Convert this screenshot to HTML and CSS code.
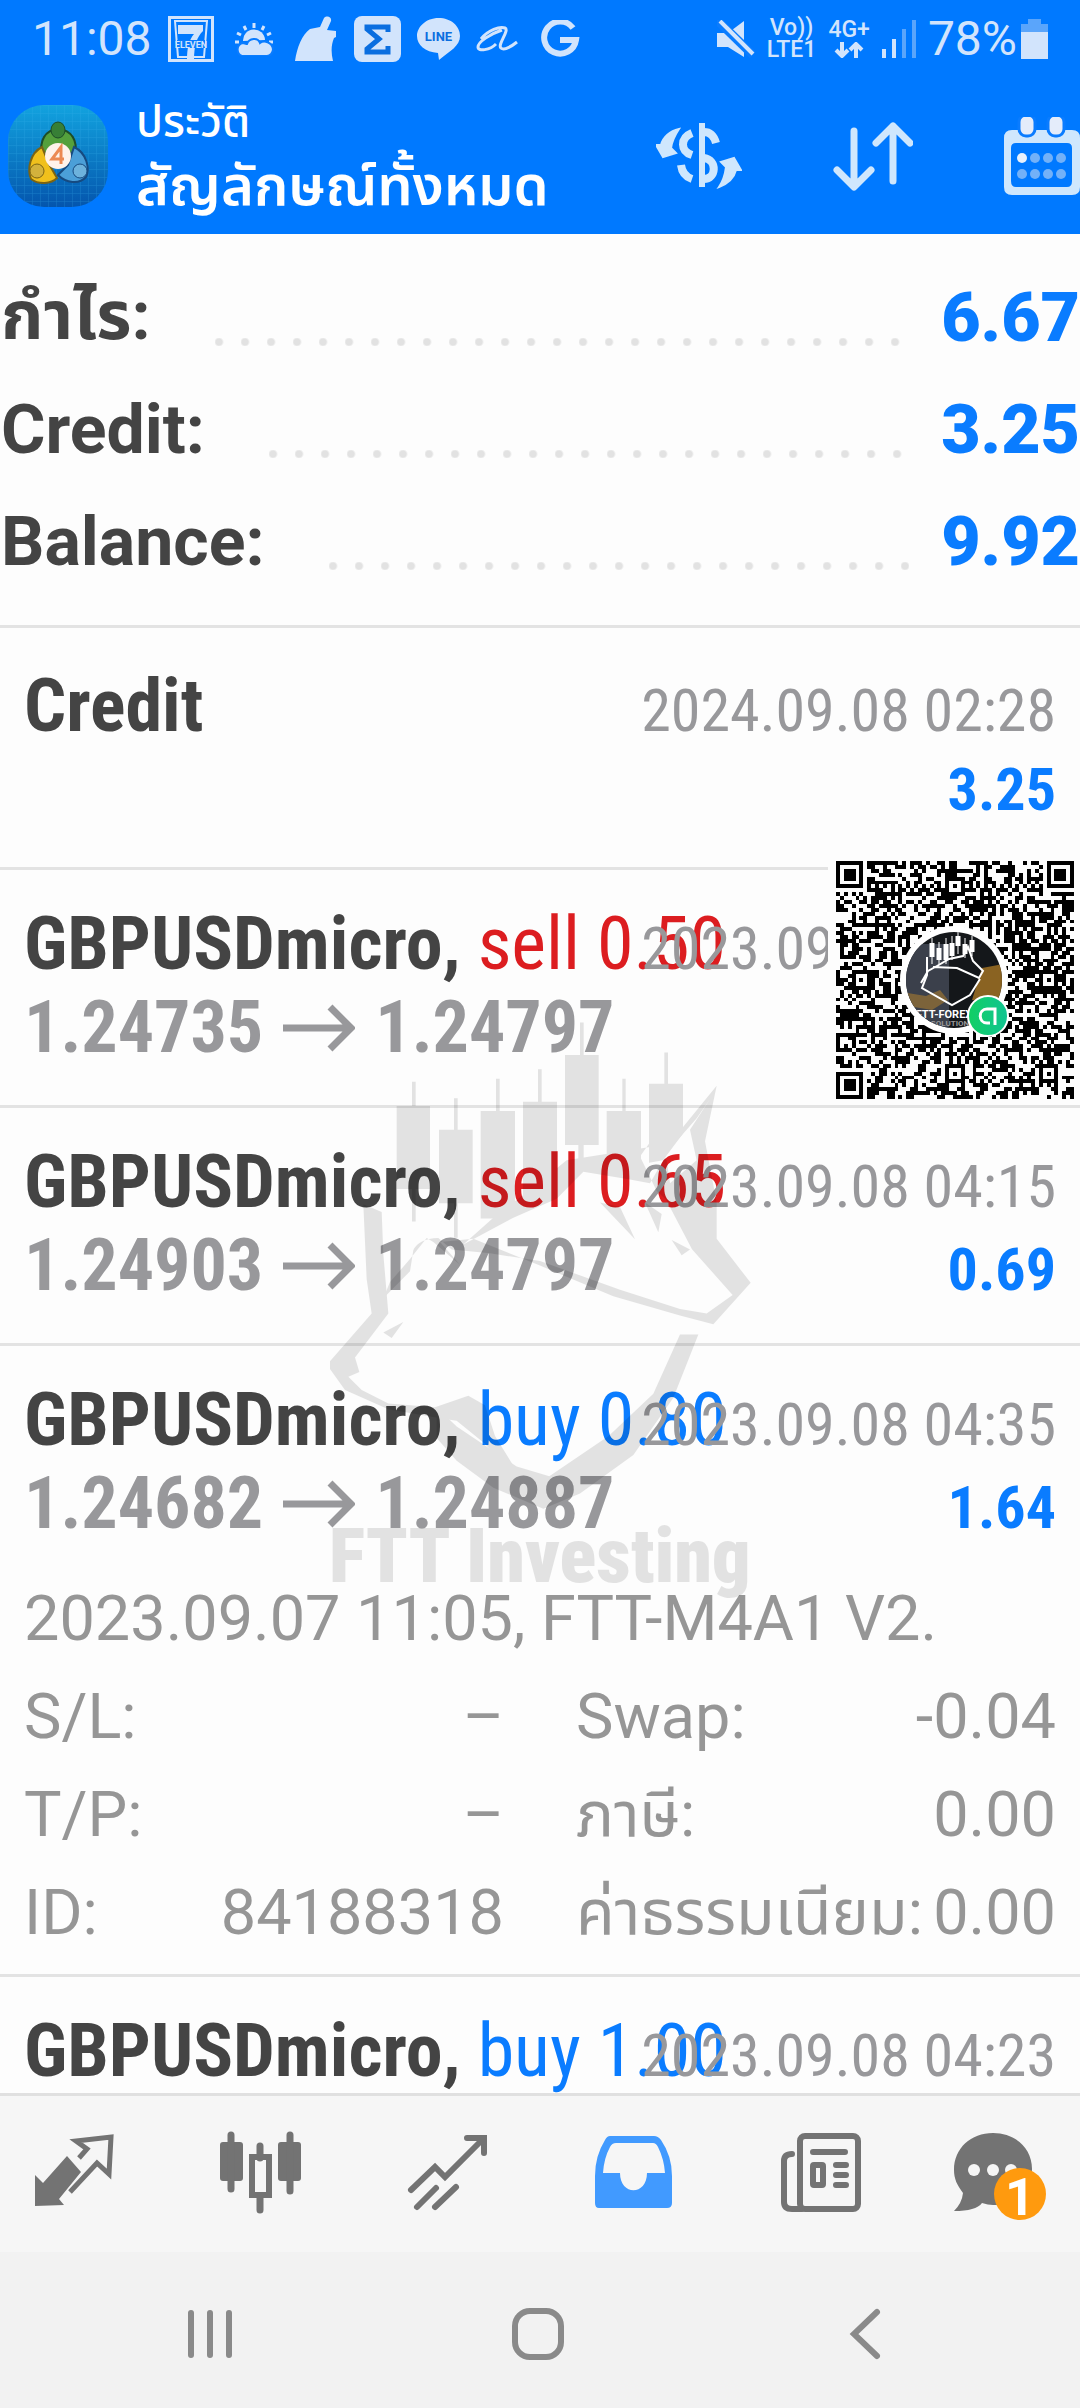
FILE: index.html
```html
<!DOCTYPE html>
<html lang="th">
<head>
<meta charset="utf-8">
<meta name="viewport" content="width=device-width, initial-scale=1">
<title>ประวัติ</title>
<link rel="stylesheet" href="styles.css">
</head>
<body>
<header class="top">
  <div class="status">
    <span class="clock">11:08</span>
    <div class="notices">
      <svg width="46" height="46" viewBox="0 0 46 46"><path d="M1.500 1.500h43v43h-43z" fill="none" stroke="#d2e4fc" stroke-width="3"/><path d="M7 5h32l-3 36H10z" fill="none" stroke="#d2e4fc" stroke-width="2"/><path d="M10 9h25v6c-6 6-9 14-9 29h-7c0-12 2-20 7-26H10z" fill="#d2e4fc"/><path d="M9 24h28v8H9z" fill="#0a7cff"/><text x="23" y="32" text-anchor="middle" class="mini">ELEVEN</text></svg>
      <svg width="40" height="34" viewBox="0 0 40 34" class="gap-s"><path d="M9 19a11 11 0 0 1 22-1" fill="#d2e4fc"/><path d="M20 1v5M10 4l2 4M30 4l-2 4M3 11l4 2M37 11l-4 2M1 20h4M39 20h-4" stroke="#d2e4fc" stroke-width="3"/><path d="M8 34a7 7 0 0 1 0-13c3 0 4 1 5 1 2-6 11-7 13-1 4-3 12-1 13 6 0 4-3 7-6 7z" fill="#d2e4fc" stroke="#0a7cff" stroke-width="2"/></svg>
      <svg width="44" height="46" viewBox="0 0 44 46" class="gap-s"><path d="M1 45C3 31 8 19 16 13l10-2 4-9c3-3 8-1 7 3l-4 9 9 1v6l-2 1c-3 7-3 15-1 23z" fill="#d2e4fc"/></svg>
      <svg width="47" height="46" viewBox="0 0 47 46"><rect width="47" height="46" rx="8" fill="#d2e4fc"/><path d="M34 16v-5H13v2l12 10-12 10v3h21v-6" fill="none" stroke="#0a6ee0" stroke-width="5"/></svg>
      <svg width="43" height="42" viewBox="0 0 43 42"><path d="M21.500 0C34 0 43 8 43 18S33 33 22 42l-1-7C8 34 0 27 0 18S9 0 21.500 0z" fill="#d2e4fc"/><text x="21.500" y="23" text-anchor="middle" class="line-txt">LINE</text></svg>
      <svg width="42" height="28" viewBox="0 0 42 28"><path d="M5 14C12 5 24 1 29 3s-8 17-4 20c3 3 11-2 16-6M26 5C14 9 2 17 2 22s12 3 18-3" fill="none" stroke="#d2e4fc" stroke-width="3"/></svg>
      <svg width="40" height="38" viewBox="0 0 40 38" class="gap-m"><path d="M33 8A16 16 0 1 0 36 20H20" fill="none" stroke="#d2e4fc" stroke-width="6"/></svg>
    </div>
    <div class="signals">
      <svg width="38" height="38" viewBox="0 0 38 38"><path d="M0 13h11L27 1v36L11 27H0z" fill="#d2e4fc"/><path d="M0 0l36 35" stroke="#0a7cff" stroke-width="9"/><path d="M3 1l33 33" stroke="#d2e4fc" stroke-width="4"/></svg>
      <span class="tiny"><span>Vo))</span><span>LTE1</span></span>
      <span class="tiny"><span>4G+</span><svg width="30" height="16" viewBox="0 0 30 16"><path d="M8 0v14M2 8l6 6 6-6M22 16V2M16 8l6-6 6 6" fill="none" stroke="#d2e4fc" stroke-width="4"/></svg></span>
      <svg width="34" height="38" viewBox="0 0 34 38"><path d="M0 29h4v9H0zM10 19h4v19h-4z" fill="#d2e4fc"/><path d="M20 9h4v29h-4zM30 0h4v38h-4z" fill="#5aa5fb"/></svg>
      <span class="clock">78%</span>
      <svg width="27" height="40" viewBox="0 0 27 40"><path d="M7 0h13v5h7v8H0V5h7z" fill="#5aa5fb"/><path d="M0 13h27v27H0z" fill="#d2e4fc"/></svg>
    </div>
  </div>
  <div class="toolbar">
    <svg class="logo" width="102" height="102" viewBox="0 0 102 102">
      <defs><linearGradient id="lg" x1="0" y1="0" x2="0" y2="1"><stop offset="0" stop-color="#12a3df"/><stop offset="1" stop-color="#0455ad"/></linearGradient>
      <pattern id="gr" width="8" height="8" patternUnits="userSpaceOnUse"><path d="M0 0h8M0 0v8" stroke="#3bb4ee" stroke-width="1" opacity=".35"/></pattern></defs>
      <rect width="100" height="102" rx="36" fill="url(#lg)"/><rect width="100" height="102" rx="36" fill="url(#gr)"/>
      <path d="M34 50c-3-14 3-25 16-26 14 1 20 12 17 26l-9-5-8-5-7 4z" fill="#54a03c" stroke="#1d4d28" stroke-width="2"/>
      <path d="M34 42c-12 6-15 22-11 32 8 6 20 5 26-1l-8-14z" fill="#f0c01c" stroke="#7b6413" stroke-width="2"/>
      <path d="M66 42c13 6 16 22 12 30-7 8-20 6-28-2l10-10z" fill="#4b9fd8" stroke="#164a80" stroke-width="2"/>
      <ellipse cx="50" cy="25" rx="7" ry="8" fill="#377f36" stroke="#1d4d28"/><circle cx="29" cy="66" r="7" fill="#d3b23c" stroke="#7b6413"/><circle cx="72" cy="66" r="7" fill="#6db2dc" stroke="#164a80"/>
      <circle cx="50" cy="51" r="13" fill="#fff3ea"/><path d="M53 59V42L44 54h12" fill="none" stroke="#ec8a52" stroke-width="3"/>
    </svg>
    <div class="titles"><span class="over">ประวัติ</span><h1>สัญลักษณ์ทั้งหมด</h1></div>
    <div class="actions">
      <button aria-label="currency"><svg width="86" height="68" viewBox="0 0 86 68"><g fill="none" stroke="#cfe7fd" stroke-width="8"><path d="M36 11c-12 5-12 18 0 22M48 10c6 0 10 4 12 11M25 43c1 8 5 12 11 14M48 36c14 2 12 21 0 21"/><path d="M46 1v64" stroke-width="6"/></g><path d="M23 7C14 9 7 15 5 23H0l7 12 13-4-5-5c1-7 4-13 8-19zM63 65c8-3 15-9 17-17h5L78 36l-13 4 5 5c-1 8-3 14-7 20z" fill="#cfe7fd" stroke="#cfe7fd" stroke-width="2"/></svg></button>
      <button aria-label="sort"><svg width="80" height="70" viewBox="0 0 80 70"><path d="M21 10v55M4 49l17 17 17-17M60 60V5M43 22L60 5l17 17" fill="none" stroke="#cfe7fd" stroke-width="7" stroke-linecap="round" stroke-linejoin="round"/></svg></button>
      <button aria-label="calendar"><svg width="76" height="78" viewBox="0 0 76 78"><path d="M8 13h60q8 0 8 8v49q0 8-8 8H8q-8 0-8-8V21q0-8 8-8zM12 26q-5 0-5 5v33q0 6 5 6h51q5 0 5-6V31q0-5-5-5z" fill="#cfe7fd" fill-rule="evenodd"/><g fill="#e4ecfa" stroke="#0a7cff" stroke-width="3"><rect x="15" y="-2" width="16" height="21" rx="7"/><rect x="44" y="-2" width="16" height="21" rx="7"/></g><circle cx="18" cy="41" r="5" fill="#e8f1fc"/><g fill="#73b1f8"><circle cx="31" cy="41" r="5"/><circle cx="44" cy="41" r="5"/><circle cx="57" cy="41" r="5"/><circle cx="18" cy="57" r="5"/><circle cx="31" cy="57" r="5"/><circle cx="44" cy="57" r="5"/><circle cx="57" cy="57" r="5"/></g></svg></button>
    </div>
  </div>
</header>

<main class="content">
  <section class="summary">
    <div class="sum"><span>กำไร:</span><i class="dots"></i><b>6.67</b></div>
    <div class="sum"><span>Credit:</span><i class="dots"></i><b>3.25</b></div>
    <div class="sum"><span>Balance:</span><i class="dots"></i><b>9.92</b></div>
  </section>

  <article class="deal credit">
    <div class="pair"><strong class="name">Credit</strong><time class="when">2024.09.08 02:28</time></div>
    <div class="pair second"><span></span><b class="gain">3.25</b></div>
  </article>
  <article class="deal">
    <div class="pair"><strong class="name">GBPUSDmicro, <span class="sell">sell 0.50</span></strong><time class="when">2023.09.08 04:05</time></div>
    <div class="pair second"><span class="price">1.24735 <svg width="72" height="50" viewBox="0 0 72 50"><path d="M0 25h68M47 4l21 21-21 21" fill="none" stroke="#98989b" stroke-width="7"/></svg> 1.24797</span></div>
    <div class="qr">
      <svg viewBox="0 0 61 61" class="modules" shape-rendering="crispEdges"><path id="modules" d=""/></svg>
      <svg viewBox="0 0 120 120" class="badge">
        <defs><clipPath id="cc"><circle cx="56" cy="56" r="48"/></clipPath><linearGradient id="gg" x1="0" x2="1"><stop offset="0" stop-color="#12cf63"/><stop offset="1" stop-color="#10c492"/></linearGradient></defs>
        <circle cx="56" cy="56" r="54" fill="#fff"/>
        <g clip-path="url(#cc)"><path d="M0 0h120v120H0z" fill="#14171a"/><path d="M8 20h43v84H8z" fill="#3b404b"/><path d="M4 68l24 4 14-6 8 10-16 10-24-4z" fill="#7c633a"/><path d="M84 44l22-4v40l-32-4z" fill="#8a6322"/>
        <path d="M34 14v26M41 18v22M48 14v26M54 12v24M60 8v22M67 14v20M74 12v20" stroke="#fff" stroke-width="1"/><path d="M34 19v14M41 24v12M48 20v16M54 19v13M60 12v10M67 20v10M74 16v12" stroke="#fff" stroke-width="5"/>
        <path d="M29 33v18l-5 13 30 17 18-10 10-16M35 43l24 1 22 10 4-7-10-10-5-14-5 9-14 3-12 7-9 5-7 12" fill="none" stroke="#fff" stroke-width="2"/>
        <text x="46" y="94" text-anchor="middle" class="qr-t">FTT-FOREX</text><text x="52" y="102" text-anchor="middle" class="qr-t dim">SOLUTION</text></g>
        <circle cx="90" cy="92" r="20" fill="url(#gg)" stroke="#fff" stroke-width="2"/><path d="M92 99h-3c-9 0-9-14 0-14h8v16" fill="none" stroke="#fff" stroke-width="3"/>
      </svg>
    </div>
  </article>
  <article class="deal">
    <div class="pair"><strong class="name">GBPUSDmicro, <span class="sell">sell 0.65</span></strong><time class="when">2023.09.08 04:15</time></div>
    <div class="pair second"><span class="price">1.24903 <svg width="72" height="50" viewBox="0 0 72 50"><path d="M0 25h68M47 4l21 21-21 21" fill="none" stroke="#98989b" stroke-width="7"/></svg> 1.24797</span><b class="gain">0.69</b></div>
  </article>
  <article class="deal open">
    <div class="pair"><strong class="name">GBPUSDmicro, <span class="buy">buy 0.80</span></strong><time class="when">2023.09.08 04:35</time></div>
    <div class="pair second"><span class="price">1.24682 <svg width="72" height="50" viewBox="0 0 72 50"><path d="M0 25h68M47 4l21 21-21 21" fill="none" stroke="#98989b" stroke-width="7"/></svg> 1.24887</span><b class="gain">1.64</b></div>
    <p class="note">2023.09.07 11:05, FTT-M4A1 V2.</p>
    <dl class="facts">
      <div><dt>S/L:</dt><dd>–</dd></div><div><dt>Swap:</dt><dd>-0.04</dd></div>
      <div><dt>T/P:</dt><dd>–</dd></div><div><dt>ภาษี:</dt><dd>0.00</dd></div>
      <div><dt>ID:</dt><dd>84188318</dd></div><div><dt>ค่าธรรมเนียม:</dt><dd>0.00</dd></div>
    </dl>
  </article>
  <article class="deal">
    <div class="pair"><strong class="name">GBPUSDmicro, <span class="buy">buy 1.00</span></strong><time class="when">2023.09.08 04:23</time></div>
  </article>

  <div class="watermark">
    <svg viewBox="0 -24 1440 1280" preserveAspectRatio="none">
      <path d="M336 135h11v63h43v217h-43v85h-11v-85h-46V198h46zM462 178h11v82h45v192h-45v90h-11v-90h-45V260h45zM588 127h11v84h46v270l-40 11h-63V211h46zM714 102h11v85h46v220l-102 50V187h45zM840-20h11v85h45v235h-45v60h-16v-60h-40V65h45zM967 127h10v84h46v146l-103 4V211h47zM1093 58h11v82h45v130l-60 70-42 6V140h46z"/>
      <path d="M190 455l55 20 5 110 15 155-100 115 13 38-33 12 40 35 80 35 140 10 100-30 50 25 30 80 60 85-30-5-60-60-85-60-40-5-165-25-130-50-45-55V865l125-125-15-90z"/>
      <path d="M410 985l60 50 180 105 98 25 178-105 134-110 80-155h55l-75 165-120 150-160 100-110 40-150-55-110-70-60-60z"/>
      <path d="M250 700l80-70 10-55q15-30 75-32l40 30 115 10 150 20 240 75 180 50 80 12 78-48-122-120-78-130-28-22-50-90 40-50 40 60 10 60 80-60-20-80 60-80-40 50-80 80-60 90-60-10-140-20-80 70-130 50-150 70 90-70 120-80 100-70 250-35 60-10 140-150-35 145 35 160v95l102 115-112 108-100-23-200-50-220-80-200-70-100 8 60 60-80-60-20-10-50 55-60 60z" fill-rule="evenodd"/>
      <path d="M900 450l60 12 45 84zM1035 450l50 30-10 48zM250 790l60-28-35 42zM1115 548l55 25-25 15z"/>
    </svg>
    <span>FTT Investing</span>
  </div>
</main>

<nav class="tabs">
  <a href="#quotes" aria-label="quotes"><svg viewBox="0 0 84 84"><path d="M3 76V45l8 8 24-27 14 16-22 27 5 6z"/><path d="M47 28l8-9-11-8 35-4-2 37-12-11-27 29" fill="none" stroke="#737373" stroke-width="5"/></svg></a>
  <a href="#chart" aria-label="chart"><svg viewBox="0 0 84 84"><rect x="1" y="12" width="23" height="39" rx="3"/><rect x="59" y="12" width="23" height="39" rx="3"/><path d="M12 5v54M71 5v56M41 16v12M41 66v14" stroke="#737373" stroke-width="7" stroke-linecap="round"/><rect x="33" y="27" width="17" height="38" fill="none" stroke="#737373" stroke-width="6"/></svg></a>
  <a href="#trade" aria-label="trade"><svg viewBox="0 0 84 84"><path d="M5 60l24-23 10 10 37-37M61 8h17v15M11 77l19-19M29 77l21-20" fill="none" stroke="#737373" stroke-width="6" stroke-linecap="round"/></svg></a>
  <a href="#history" aria-label="history"><svg viewBox="0 0 84 84"><path d="M17 6h44q4 0 7 4 11 16 11 36v27q0 5-5 5H6q-4 0-4-5V46Q2 26 12 10q2-4 5-4zM23 13q-4 0-6 4-6 11-7 26h17c0 23 27 23 27 0h18q-1-14-7-26-2-4-5-4z" fill="#419aff" fill-rule="evenodd"/></svg></a>
  <a href="#news" aria-label="news"><svg viewBox="0 0 84 84"><rect x="20" y="6" width="58" height="73" rx="5" fill="none" stroke="#737373" stroke-width="6"/><path d="M12 24q-8 0-8 7v41q0 7 8 7h10M33 22h32M56 35h10M56 45h10M56 55h10" fill="none" stroke="#737373" stroke-width="6" stroke-linecap="round"/><rect x="33" y="35" width="10" height="20" rx="1" fill="none" stroke="#737373" stroke-width="6"/></svg></a>
  <a href="#chat" aria-label="chat"><svg viewBox="0 0 84 84"><path d="M26 3c22 0 39 15 39 36S49 75 26 75q-5 0-11-2-6 8-28 8 8-8 9-18C-10 55-13 49-13 40-13 18 4 3 26 3z"/><g fill="#f5f5f5"><circle cx="7" cy="40" r="6"/><circle cx="26" cy="40" r="6"/><circle cx="44" cy="40" r="6"/></g><circle cx="53" cy="64" r="26" fill="#ff9a0e"/></svg><b class="count">1</b></a>
</nav>
<nav class="system">
  <button aria-label="recents"><svg viewBox="0 0 60 60"><path d="M11 9v42M30 9v42M49 9v42"/></svg></button>
  <button aria-label="home"><svg viewBox="0 0 60 60"><rect x="7" y="7" width="46" height="46" rx="15"/></svg></button>
  <button aria-label="back"><svg viewBox="0 0 60 60"><path d="M41 8L18 30l23 22"/></svg></button>
</nav>
<script src="qr.js"></script>
</body>
</html>
```
FILE: qr.js
```js
// Fills the code with finder, alignment and timing marks around data modules.
(function () {
  var n = 61, seed = 20240908, d = '';
  function rnd() { seed = (seed * 1103515245 + 12345) % 2147483648; return seed / 2147483648; }
  function ring(x, y, cx, cy) { return Math.max(Math.abs(x - cx), Math.abs(y - cy)); }
  var finders = [[3, 3], [57, 3], [3, 57]];
  var aligns = [[30, 6], [6, 30], [30, 30], [54, 30], [30, 54], [54, 54]];
  for (var y = 0; y < n; y++) {
    for (var x = 0; x < n; x++) {
      var on = rnd() < 0.52;
      if (y === 6) on = x % 2 === 0;
      if (x === 6) on = y % 2 === 0;
      aligns.forEach(function (a) { var r = ring(x, y, a[0], a[1]); if (r <= 2) on = r !== 1; });
      finders.forEach(function (f) { var r = ring(x, y, f[0], f[1]); if (r <= 4) on = r !== 2 && r !== 4; });
      if (on) d += 'M' + x + ' ' + y + 'h1v1h-1z';
    }
  }
  document.getElementById('modules').setAttribute('d', d);
})();
```
FILE: styles.css
```css
* { box-sizing: border-box; }
html, body { margin: 0; }
body {
  display: flex;
  flex-direction: column;
  height: 100vh;
  background: #fdfdfd;
  color: #444;
  font-family: Roboto, "Noto Sans Thai", "Noto Sans", sans-serif;
}
svg { display: block; flex: none; }
button { border: 0; padding: 0; background: none; }

.top { background: #0079ff; color: #fff; flex: none; height: 234px; }
.status {
  display: flex;
  align-items: center;
  height: 78px;
  padding: 0 32px;
  color: #d2e4fc;
}
.clock { font-size: 48px; line-height: 56px; }
.notices { display: flex; align-items: center; gap: 16px; margin-left: 16px; }
.gap-s { margin-left: 4px; }
.gap-m { margin-left: 6px; }
.mini { font: 700 9px Roboto, sans-serif; fill: #d2e4fc; }
.line-txt { font: 700 13px Roboto, sans-serif; fill: #0a6ee0; }
.signals { display: flex; align-items: center; gap: 12px; margin-left: auto; }
.signals .clock + svg { margin-left: -8px; }
.tiny {
  display: flex;
  flex-direction: column;
  align-items: center;
  gap: 2px;
  font-size: 23px;
  line-height: 20px;
  font-weight: 500;
}

.toolbar { display: flex; align-items: center; height: 156px; padding-left: 8px; }
.titles { margin-left: 26px; white-space: nowrap; }
.over { display: block; font-size: 44px; line-height: 60px; font-weight: 500; }
h1 { margin: 0; font-size: 56px; line-height: 68px; font-weight: 600; }
.actions { display: flex; align-items: center; gap: 91px; margin-left: auto; }

.content { position: relative; flex: 1; min-height: 0; overflow: hidden; }
.summary { padding: 28px 0 27px; border-bottom: 3px solid #e3e3e3; }
.sum {
  display: flex;
  align-items: center;
  height: 112px;
  font-size: 68px;
  font-weight: 700;
}
.sum span { padding-left: 1px; }
.sum b { color: #0a7cff; }
.dots {
  flex: 1;
  height: 8px;
  margin: 48px 32px 0 64px;
  background: radial-gradient(circle at 4px 4px, #e2e2e2 3px, transparent 5px) 0 0 / 26px 8px repeat-x;
}

.deal {
  position: relative;
  height: 238px;
  padding: 32px 24px 0;
  border-bottom: 3px solid #e3e3e3;
  font-family: "Roboto Condensed", "Liberation Sans Narrow", sans-serif;
}
.credit { height: 242px; padding-top: 36px; }
.pair {
  display: flex;
  justify-content: space-between;
  align-items: baseline;
  height: 84px;
  line-height: 84px;
  white-space: nowrap;
}
.name { width: 0; font-size: 74px; font-weight: 700; }
.name span { font-weight: 400; }
.sell { color: #dc1d20; }
.buy { color: #0a7cff; }
.when { position: relative; font-size: 60px; color: #98989b; }
.price { display: flex; align-items: center; gap: 20px; font-size: 72px; font-weight: 700; color: #98989b; }
.gain { font-size: 60px; color: #0a7cff; }
.open { height: auto; padding-bottom: 12px; }
.note, .facts { margin: 0; font-family: Roboto, "Noto Sans Thai", sans-serif; font-size: 63px; color: #969696; }
.note { line-height: 98px; padding-top: 24px; white-space: nowrap; }
.facts { display: grid; grid-template-columns: 1fr 1fr; column-gap: 72px; }
.facts div { display: flex; justify-content: space-between; height: 98px; line-height: 98px; white-space: nowrap; }
.facts dd { margin: 0; }

.qr { position: absolute; top: -15px; right: 0; width: 252px; height: 250px; padding: 6px; background: #fdfdfd; }
.modules { width: 238px; height: 238px; margin-left: 2px; }
.badge { position: absolute; left: 70px; top: 69px; width: 120px; height: 120px; }
.qr-t { font: 700 11px Roboto, sans-serif; fill: #fff; }
.dim { font-size: 8px; fill: #999; }

.watermark { position: absolute; left: 300px; top: 787px; width: 480px; opacity: .1; color: #000; }
.watermark svg { width: 480px; height: 490px; }
.watermark span { display: block; margin-left: 29px; font: 900 76px/90px "Roboto Condensed", "Liberation Sans Narrow", sans-serif; white-space: nowrap; }

.tabs {
  display: flex;
  justify-content: space-between;
  flex: none;
  height: 159px;
  padding: 34px 29px 0 32px;
  background: #f6f6f6;
  border-top: 3px solid #e0e0e0;
}
.tabs a { position: relative; width: 84px; height: 84px; color: #fff; }
.tabs svg { width: 84px; height: 84px; overflow: visible; fill: #737373; }
.count { position: absolute; left: 38px; top: 40px; font-size: 52px; line-height: 56px; }
.system {
  display: flex;
  justify-content: space-between;
  flex: none;
  height: 156px;
  padding: 52px 184px 0 180px;
  background: #f2f2f2;
}
.system svg { width: 60px; height: 60px; fill: none; stroke: #8a8a8a; stroke-width: 6; stroke-linecap: round; }
.system button { height: 60px; }
```
